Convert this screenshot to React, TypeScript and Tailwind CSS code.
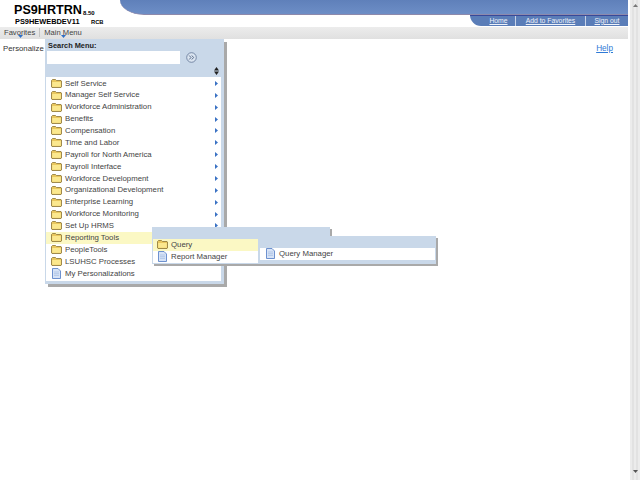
const F = "font-['Liberation_Sans',Arial,sans-serif]";

function Folder() {
  return (
    <svg width="11" height="9" viewBox="0 0 11 9" className="shrink-0">
      <path d="M0.5 1.5 L1.5 0.5 H4.5 L5.5 1.5 H10 L10.5 2 V8 L10 8.5 H1 L0.5 8 Z" fill="#e9c75e" stroke="#8a7433" strokeWidth="0.8" />
      <path d="M1.2 3 H9.8 V7.8 H1.2 Z" fill="#fbe88e" />
    </svg>
  );
}

function Page() {
  return (
    <svg width="9" height="11" viewBox="0 0 9 11" className="shrink-0">
      <path d="M0.5 0.5 H6 L8.5 3 V10.5 H0.5 Z" fill="#d7e3f6" stroke="#5f86c9" strokeWidth="0.9" />
      <path d="M2 4 H7 M2 5.7 H7 M2 7.4 H7" stroke="#a3bce2" strokeWidth="0.7" />
    </svg>
  );
}

function Row({ label, icon, active, arrow, tight }: { label: string; icon: "f" | "p"; active?: boolean; arrow?: boolean; tight?: boolean }) {
  return (
    <div className={`flex h-[11.875px] items-center pr-[3px] ${tight ? "pl-[3px]" : "pl-[4px]"} ${active ? "bg-[#fbf8c4]" : ""}`}>
      <div className="flex w-[12px] justify-center">{icon === "f" ? <Folder /> : <Page />}</div>
      <span className="ml-[3px] flex-1 whitespace-nowrap text-[7.8px] leading-none text-[#444444]">{label}</span>
      {arrow && (
        <svg width="3" height="5" viewBox="0 0 3 5" className="shrink-0">
          <path d="M0 0 L3 2.5 L0 5 Z" fill="#3a72c4" />
        </svg>
      )}
    </div>
  );
}

const items = [
  "Self Service", "Manager Self Service", "Workforce Administration", "Benefits", "Compensation",
  "Time and Labor", "Payroll for North America", "Payroll Interface", "Workforce Development",
  "Organizational Development", "Enterprise Learning", "Workforce Monitoring", "Set Up HRMS",
];

function Tab({ label, w }: { label: string; w: string }) {
  return (
    <div className={`flex h-full items-center justify-center border-r border-[#c7d3e8] last:border-r-0 ${w}`}>
      <span className="text-[6.8px] leading-none text-[#eef2fa] underline">{label}</span>
    </div>
  );
}

function NavArrow() {
  return (
    <svg width="5" height="3" viewBox="0 0 5 3" className="absolute bottom-[-2px] left-1/2 -ml-[2px]">
      <path d="M0 0 H5 L2.5 3 Z" fill="#2f6fc6" />
    </svg>
  );
}

export default function App() {
  return (
    <div className={`${F} relative flex h-[480px] w-[640px] overflow-hidden bg-white`}>
      <div className="flex w-[628px] flex-col">
        {/* header */}
        <div className="flex h-[27px]">
          <div className="w-[120px] shrink-0 pl-[14px] text-black">
            <div className="flex items-end pt-[3px]">
              <span className="text-[12.6px] font-bold leading-[14px]">PS9HRTRN</span>
              <span className="ml-[1px] text-[6px] font-bold leading-[8px]">8.50</span>
            </div>
            <div className="flex items-center pl-[1px] pt-[1px]">
              <span className="w-[76px] text-[7.4px] font-bold leading-[8px]">PS9HEWEBDEV11</span>
              <span className="text-[5.8px] font-bold leading-[8px]">RCB</span>
            </div>
          </div>
          <div className="flex min-w-0 flex-1 flex-col">
            <div className="h-[15px] rounded-bl-[24px_15px] border-b border-[#8d89ab] bg-[linear-gradient(180deg,#5f80ba,#6d8ec6)]" />
            <div className="flex h-[11px] justify-end">
              <div className="flex w-[158px] rounded-bl-[12px] border-t border-[#38499a] bg-[#5a7db8] pl-[12px]">
                <Tab label="Home" w="w-[34px]" />
                <Tab label="Add to Favorites" w="w-[70px]" />
                <Tab label="Sign out" w="flex-1" />
              </div>
            </div>
          </div>
        </div>
        {/* nav */}
        <div className="flex h-[12px] items-center bg-[linear-gradient(180deg,#ececec,#e0e0e0)] pb-[1px] pl-[4px] text-[7.6px] leading-none text-[#444444]">
          <span className="relative">Favorites<NavArrow /></span>
          <span className="mx-[4px] h-[9px] w-px bg-[#c4c4c4]" />
          <span className="relative">Main Menu<NavArrow /></span>
        </div>
        {/* content */}
        <div className="flex justify-between pl-[3px] pr-[15px] pt-[5px] text-[7.8px] leading-[10px]">
          <span className="text-[#333333]">Personalize</span>
          <span className="text-[8.2px] text-[#2f7ad6] underline">Help</span>
        </div>
      </div>
      {/* scrollbar */}
      <div className="ml-[2px] flex w-[10px] flex-col items-center justify-between bg-[repeating-linear-gradient(90deg,#ececec_0px,#ececec_2px,#e2e2e2_2px,#e2e2e2_4px)] py-[4px]">
        <svg width="5" height="3" viewBox="0 0 5 3"><path d="M2.5 0 L5 3 H0 Z" fill="#777" /></svg>
        <svg width="5" height="3" viewBox="0 0 5 3" className="mb-[3px]"><path d="M0 0 H5 L2.5 3 Z" fill="#555" /></svg>
      </div>

      {/* main menu */}
      <div className="absolute left-[45px] top-[39px] flex h-[245px] w-[179px] flex-col bg-[#c9d8e9] pl-[1px] pr-[3px] shadow-[3px_3px_0_#a9a9a9]">
        <div className="pl-[2px] pt-[2px] text-[7.4px] font-bold leading-[9px] text-[#222]">Search Menu:</div>
        <div className="mt-[1px] flex items-center pl-[1px]">
          <div className="h-[13px] w-[133px] bg-white" />
          <svg width="11" height="11" viewBox="0 0 11 11" className="ml-[6px]">
            <circle cx="5.5" cy="5.5" r="4.8" fill="#dbe5f1" stroke="#6c7f9e" strokeWidth="0.9" />
            <path d="M3.2 3.5 L5 5.5 L3.2 7.5 M5.8 3.5 L7.6 5.5 L5.8 7.5" fill="none" stroke="#4a5c7d" strokeWidth="0.9" />
          </svg>
        </div>
        <div className="flex h-[13px] items-center justify-end pr-[2px]">
          <svg width="5" height="8" viewBox="0 0 5 8">
            <path d="M2.5 0 L5 3.4 H0 Z M0 4.6 H5 L2.5 8 Z" fill="#222" />
          </svg>
        </div>
        <div className="h-[204px] w-[175px] bg-white pt-[0.5px]">
          {items.map((t) => (
            <Row key={t} label={t} icon="f" arrow />
          ))}
          <Row label="Reporting Tools" icon="f" active />
          <Row label="PeopleTools" icon="f" />
          <Row label="LSUHSC Processes" icon="f" />
          <Row label="My Personalizations" icon="p" />
        </div>
      </div>

      {/* first flyout */}
      <div className="absolute left-[152px] top-[227px] h-[37px] w-[178px] bg-[#c9d8e9] pl-[1px] pt-[12px] shadow-[2px_2px_0_#a9a9a9]">
        <div className="w-[105px] bg-white">
          <Row label="Query" icon="f" active tight />
          <Row label="Report Manager" icon="p" tight />
        </div>
      </div>

      {/* second flyout */}
      <div className="absolute left-[259px] top-[236px] h-[28px] w-[177px] bg-[#c9d8e9] px-[1px] pt-[12px] shadow-[2px_2px_0_#a9a9a9]">
        <div className="bg-white">
          <Row label="Query Manager" icon="p" />
        </div>
      </div>
    </div>
  );
}
